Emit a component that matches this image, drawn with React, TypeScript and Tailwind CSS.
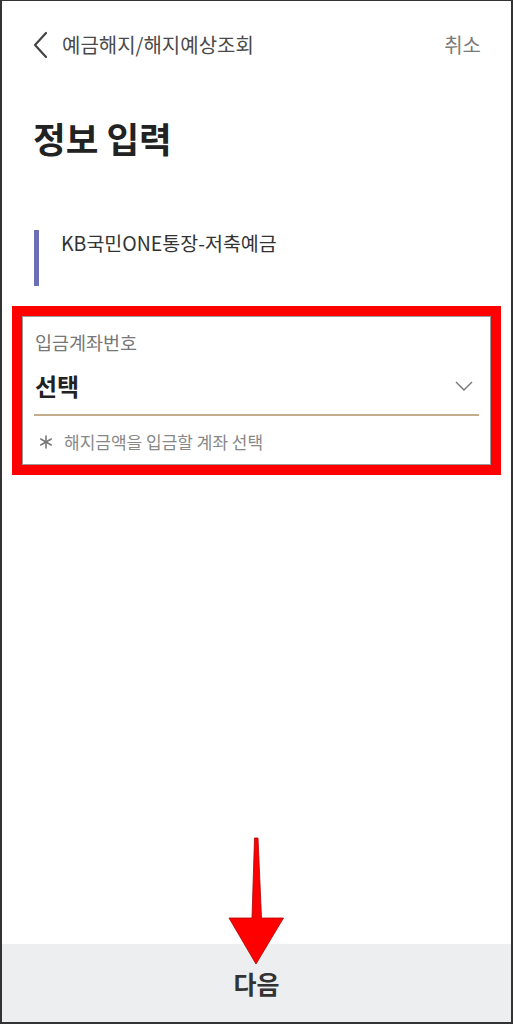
import React from "react";

const font = { fontFamily: '"Noto Sans CJK KR", "Noto Sans", sans-serif' };

export default function App() {
  return (
    <div
      className="relative flex h-[1024px] w-[513px] flex-col overflow-hidden border-x-2 border-t border-b-2 border-[#333] bg-white"
      style={font}
    >
      {/* Header */}
      <div className="mt-[16px] flex h-[56px] items-center justify-between pl-[30px] pr-[30px]">
        <div className="flex items-center">
          <svg width="18" height="28" viewBox="0 0 18 28" className="mr-[12px]">
            <path d="M14 2 L3 14 L14 26" fill="none" stroke="#444" strokeWidth="2.2" strokeLinecap="round" strokeLinejoin="round" />
          </svg>
          <span className="text-[20px] leading-[24px] text-[#4a4a4a]">예금해지/해지예상조회</span>
        </div>
        <span className="text-[20px] leading-[24px] text-[#7a7a7a]">취소</span>
      </div>

      {/* Heading */}
      <div className="mt-[44px] pl-[31px] text-[35.5px] font-bold leading-[42px] text-[#222]">정보 입력</div>

      {/* Product */}
      <div className="mt-[71px] ml-[32px] flex h-[56px]">
        <div className="w-[5px] bg-[#6b70b4]" />
        <div className="pl-[22px] text-[19.5px] leading-[24px] text-[#333] mt-[1px]">KB국민ONE통장-저축예금</div>
      </div>

      {/* Highlighted field */}
      <div className="mx-[10px] mt-[20px] border-[10px] border-[#ff0000]">
        <div className="border border-[#9a9a9a] bg-white px-[11px] pt-[13px] pb-[11px]">
          <div className="pl-[1px] text-[18.5px] leading-[24px] text-[#777]">입금계좌번호</div>
          <div className="mt-[16px] flex items-center justify-between pl-[1px] pr-[6px]">
            <span className="text-[24px] font-bold leading-[31px] text-[#222]">선택</span>
            <svg width="18" height="10" viewBox="0 0 18 10">
              <path d="M1 1 L9 9 L17 1" fill="none" stroke="#777" strokeWidth="1.4" />
            </svg>
          </div>
          <div className="mt-[13px] h-[2px] bg-[#c2ae8b]" />
          <div className="mt-[15px] flex items-center pl-[5px] text-[17px] leading-[22px] text-[#888]">
            <svg width="14" height="14" viewBox="0 0 14 14" className="mr-[11px]">
              <g stroke="#777" strokeWidth="1.6" strokeLinecap="round">
                <path d="M7 1 L7 13" />
                <path d="M1.8 4 L12.2 10" />
                <path d="M1.8 10 L12.2 4" />
              </g>
            </svg>
            <span>해지금액을 입금할 계좌 선택</span>
          </div>
        </div>
      </div>

      {/* Bottom button */}
      <div className="mt-auto flex h-[78px] items-center justify-center bg-[#eceef0]">
        <span className="text-[25px] font-bold leading-[30px] text-[#333]">다음</span>
      </div>

      {/* Annotation arrow */}
      <svg
        className="absolute left-[226px] top-[835px]"
        width="58"
        height="130"
        viewBox="0 0 58 130"
      >
        <path
          d="M26.5 2 L30 2 L33.5 82 L55.5 82 L28 128 L1 82 L24 82 Z"
          fill="#ff0000"
          stroke="#b00000"
          strokeWidth="0.8"
        />
      </svg>
    </div>
  );
}
